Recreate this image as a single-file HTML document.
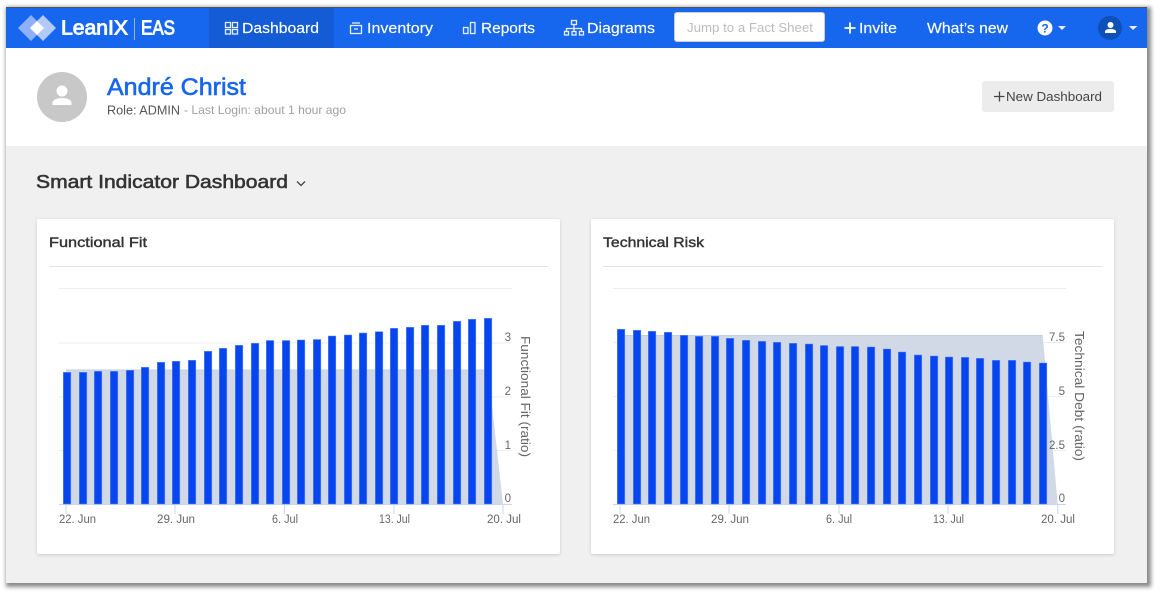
<!DOCTYPE html>
<html><head><meta charset="utf-8"><title>LeanIX EAS</title>
<style>
html,body{margin:0;padding:0;background:#fff;width:1160px;height:594px;overflow:hidden}
#root{position:absolute;left:0;top:0;width:1160px;height:594px;filter:blur(.35px)}
#win{position:absolute;left:6px;top:7px;width:1141px;height:576px;background:#f0f0f0;box-shadow:2px 2px 4px 2px #8a8a8a}
#nav{position:absolute;left:0;top:0;width:1141px;height:41px;background:#1766ee;border-top:1px solid #555;box-sizing:border-box}
#act{position:absolute;left:203px;top:1px;width:125px;height:40px;background:#135cd6}
#prof{position:absolute;left:0;top:41px;width:1141px;height:98px;background:#fff}
.card{position:absolute;top:212px;width:523px;height:335px;background:#fff;border-radius:2px;box-shadow:0 1px 3px rgba(0,0,0,.16)}
#inp{position:absolute;left:668px;top:5px;width:151px;height:30px;box-sizing:border-box;background:#fff;border:1px solid #ccc;border-radius:3px}
#btn{position:absolute;left:976px;top:74px;width:132px;height:31px;background:#ececec;border-radius:3px}
svg{position:absolute;left:0;top:0}
text{font-family:"Liberation Sans",sans-serif}
.n{fill:#fff;font-size:15px;stroke:#fff;stroke-width:.15px}
.a{fill:#666;font-size:11.5px}
.t{fill:#333;font-size:14px;stroke:#333;stroke-width:.4px}
.i{fill:none;stroke:#e6eefe;stroke-width:1.3}
</style></head><body>
<div id="root">
<div id="win">
<div id="nav"></div><div id="act"></div>
<div id="inp"></div>
<div id="prof"></div><div id="btn"></div>
<div class="card" style="left:31px"></div>
<div class="card" style="left:585px"></div>
</div>
<svg width="1160" height="594" viewBox="0 0 1160 594">
<!-- logo -->
<polygon points="18,28 31,15 44,28 31,41" fill="#8fb0f7"/>
<polygon points="30,28 43,15 56,28 43,41" fill="#b3c9fa"/>
<polygon points="30,28 37,21 44,28 37,35" fill="#fff"/>
<text x="61" y="34.5" fill="#fff" font-size="20" stroke="#fff" stroke-width=".9" textLength="67" lengthAdjust="spacingAndGlyphs">LeanIX</text>
<rect x="134" y="18" width="1" height="22" fill="#8fb4f7"/>
<text x="141" y="34.5" fill="#fff" font-size="20" stroke="#fff" stroke-width=".9" textLength="34" lengthAdjust="spacingAndGlyphs">EAS</text>
<!-- nav -->
<g class="i"><rect x="225.5" y="22.5" width="5" height="5"/><rect x="232.5" y="22.5" width="5" height="5"/><rect x="225.5" y="29.5" width="5" height="4.5"/><rect x="232.5" y="29.5" width="5" height="4.5"/></g>
<text class="n" x="242" y="33" textLength="77" lengthAdjust="spacingAndGlyphs">Dashboard</text>
<g class="i"><rect x="350.5" y="25.5" width="11" height="8"/><path d="M352 23h8M354 29h4"/></g>
<text class="n" x="367" y="33" textLength="66" lengthAdjust="spacingAndGlyphs">Inventory</text>
<g class="i"><rect x="463.5" y="27.5" width="4.5" height="6"/><rect x="470.5" y="22.5" width="4.5" height="11"/></g>
<text class="n" x="481" y="33" textLength="54" lengthAdjust="spacingAndGlyphs">Reports</text>
<g class="i"><rect x="571.5" y="20.5" width="5" height="4"/><path d="M574 25v3M566.500 31v-2.500h15v2.500M574 28v3"/><rect x="564.500" y="31.500" width="4" height="3.500"/><rect x="572" y="31.500" width="4" height="3.500"/><rect x="579.500" y="31.500" width="4" height="3.500"/></g>
<text class="n" x="587" y="33" textLength="68" lengthAdjust="spacingAndGlyphs">Diagrams</text>
<text x="687" y="32" fill="#bcbcbc" font-size="13" textLength="126" lengthAdjust="spacingAndGlyphs">Jump to a Fact Sheet</text>
<path d="M850 22.500v11M844.500 28h11" stroke="#fff" stroke-width="1.800" fill="none"/>
<text class="n" x="859" y="33" textLength="38" lengthAdjust="spacingAndGlyphs">Invite</text>
<text class="n" x="927" y="33" textLength="81" lengthAdjust="spacingAndGlyphs">What’s new</text>
<circle cx="1045" cy="28" r="7.500" fill="#fff"/>
<text x="1045" y="32.500" fill="#1766ee" font-size="12" font-weight="bold" text-anchor="middle">?</text>
<polygon points="1058,26 1066,26 1062,30" fill="#e6eefe"/>
<circle cx="1110" cy="28" r="12" fill="#0f4fb8"/>
<circle cx="1110.500" cy="25" r="3" fill="#fff"/>
<path d="M1105 33v-1.500c0-1.500 2-2.500 5.500-2.500s5.500 1 5.500 2.500V33z" fill="#fff"/>
<polygon points="1129,26 1137.500,26 1133,30" fill="#e6eefe"/>
<!-- profile -->
<circle cx="62" cy="97" r="25" fill="#c8c8c8"/>
<circle cx="62" cy="91" r="5.500" fill="#fff"/>
<path d="M52.500 105v-2c0-3 4-5 9.500-5s9.500 2 9.500 5v2z" fill="#fff"/>
<text x="107" y="95" fill="#1766ee" font-size="24" stroke="#1766ee" stroke-width=".6" textLength="139" lengthAdjust="spacingAndGlyphs">André Christ</text>
<text x="107" y="114.500" fill="#555" font-size="12.500" textLength="73" lengthAdjust="spacingAndGlyphs">Role: ADMIN</text>
<text x="184" y="114" fill="#a0a0a0" font-size="12" textLength="162" lengthAdjust="spacingAndGlyphs">- Last Login: about 1 hour ago</text>
<path d="M999.500 91.500v10M994 96.500h10.500" stroke="#444" stroke-width="1.300" fill="none"/>
<text x="1006" y="101" fill="#444" font-size="13" textLength="96" lengthAdjust="spacingAndGlyphs">New Dashboard</text>
<text x="36" y="188" fill="#333" font-size="18" stroke="#333" stroke-width=".55" textLength="252" lengthAdjust="spacingAndGlyphs">Smart Indicator Dashboard</text>
<path d="M297 181.500l4 4 4-4" fill="none" stroke="#444" stroke-width="1.300"/>
<!-- card 1 -->
<text class="t" x="49" y="247" textLength="98" lengthAdjust="spacingAndGlyphs">Functional Fit</text>
<rect x="49" y="266" width="499" height="1" fill="#e4e4e4"/>
<path d="M59 288.500h453M59 343h453M59 397h453M59 450.500h453" stroke="#eee" fill="none"/>
<polygon points="66,370 488,369.500 503,504 66,504" fill="#d2d9e6"/>
<path d="M66 370H488" stroke="#c5cedd" fill="none"/>
<path d="M59 504.500h453M66 504v10M175 504v10M284.500 504v10M394 504v10M503 504v10" stroke="#ccd6eb" fill="none"/>
<path fill="#0745ef" stroke="#5f8af5" stroke-width=".6" d="M63.300 372.300h7.500V504h-7.500zM79.300 372.300h7.500V504h-7.500zM94.300 371.300h7.500V504h-7.500zM110.300 371.300h7.500V504h-7.500zM126.300 370.300h7.500V504h-7.500zM141.300 367.300h7.500V504h-7.500zM157.300 362.300h7.500V504h-7.500zM172.300 361.300h7.500V504h-7.500zM188.300 360.300h7.500V504h-7.500zM204.300 351.300h7.500V504h-7.500zM219.300 348.300h7.500V504h-7.500zM235.300 345.300h7.500V504h-7.500zM251.300 343.300h7.500V504h-7.500zM266.300 340.500h7.500V504h-7.500zM282.300 340.500h7.500V504h-7.500zM297.300 340h7.500V504h-7.500zM313.300 339.500h7.500V504h-7.500zM328.300 336h7.500V504h-7.500zM344.300 335h7.500V504h-7.500zM359.300 333h7.500V504h-7.500zM375.300 331.700h7.500V504h-7.500zM390.300 328.300h7.500V504h-7.500zM406.300 327.300h7.500V504h-7.500zM421.300 325.300h7.500V504h-7.500zM437.300 325.300h7.500V504h-7.500zM453.300 321.300h7.500V504h-7.500zM468.300 319.300h7.500V504h-7.500zM484.300 318.300h7.500V504h-7.500z"/>
<g class="a" text-anchor="end"><text x="511" y="341">3</text><text x="511" y="395">2</text><text x="511" y="449">1</text><text x="511" y="502">0</text></g>
<text class="a" x="59" y="523" textLength="37" lengthAdjust="spacingAndGlyphs">22. Jun</text>
<text class="a" x="157" y="523" textLength="38" lengthAdjust="spacingAndGlyphs">29. Jun</text>
<text class="a" x="272" y="523" textLength="26" lengthAdjust="spacingAndGlyphs">6. Jul</text>
<text class="a" x="379" y="523" textLength="31" lengthAdjust="spacingAndGlyphs">13. Jul</text>
<text class="a" x="487" y="523" textLength="34" lengthAdjust="spacingAndGlyphs">20. Jul</text>
<text transform="translate(521,336) rotate(90)" fill="#666" font-size="12.500" textLength="121" lengthAdjust="spacingAndGlyphs">Functional Fit (ratio)</text>
<!-- card 2 -->
<text class="t" x="603" y="247" textLength="101" lengthAdjust="spacingAndGlyphs">Technical Risk</text>
<rect x="603" y="266" width="499" height="1" fill="#e4e4e4"/>
<path d="M613 288.500h453M613 342.500h453M613 396.500h453M613 450.500h453" stroke="#eee" fill="none"/>
<polygon points="620,335.500 1042.700,335.500 1057.700,504 620,504" fill="#d2d9e6"/>
<path d="M620 335.500H1042.700" stroke="#c5cedd" fill="none"/>
<path d="M613 504.500h453M620 504v10M729 504v10M839 504v10M948 504v10M1057.700 504v10" stroke="#ccd6eb" fill="none"/>
<path fill="#0745ef" stroke="#5f8af5" stroke-width=".6" d="M617.300 329.300h7.500V504h-7.500zM633.300 330.300h7.500V504h-7.500zM648.300 331.300h7.500V504h-7.500zM664.300 332.300h7.500V504h-7.500zM680.300 335.300h7.500V504h-7.500zM695.300 336.300h7.500V504h-7.500zM711.300 336.300h7.500V504h-7.500zM726.300 338.300h7.500V504h-7.500zM742.300 340.300h7.500V504h-7.500zM758.300 341.300h7.500V504h-7.500zM773.300 342.300h7.500V504h-7.500zM789.300 343.300h7.500V504h-7.500zM805.300 344h7.500V504h-7.500zM820.300 345.500h7.500V504h-7.500zM836.300 346.500h7.500V504h-7.500zM851.300 346.500h7.500V504h-7.500zM867.300 347h7.500V504h-7.500zM883.300 349h7.500V504h-7.500zM898.300 352h7.500V504h-7.500zM914.300 355h7.500V504h-7.500zM930.300 356h7.500V504h-7.500zM945.300 357h7.500V504h-7.500zM961.300 357.300h7.500V504h-7.500zM976.300 358.300h7.500V504h-7.500zM992.300 360.300h7.500V504h-7.500zM1008.300 360.300h7.500V504h-7.500zM1023.300 362h7.500V504h-7.500zM1039.300 363h7.500V504h-7.500z"/>
<g class="a" text-anchor="end"><text x="1065" y="341">7.5</text><text x="1065" y="395">5</text><text x="1065" y="449">2.5</text><text x="1065" y="502">0</text></g>
<text class="a" x="613" y="523" textLength="37" lengthAdjust="spacingAndGlyphs">22. Jun</text>
<text class="a" x="711" y="523" textLength="38" lengthAdjust="spacingAndGlyphs">29. Jun</text>
<text class="a" x="826" y="523" textLength="26" lengthAdjust="spacingAndGlyphs">6. Jul</text>
<text class="a" x="933" y="523" textLength="31" lengthAdjust="spacingAndGlyphs">13. Jul</text>
<text class="a" x="1041" y="523" textLength="34" lengthAdjust="spacingAndGlyphs">20. Jul</text>
<text transform="translate(1075,331) rotate(90)" fill="#666" font-size="12.500" textLength="130" lengthAdjust="spacingAndGlyphs">Technical Debt (ratio)</text>
</svg>
</div>
</body></html>
